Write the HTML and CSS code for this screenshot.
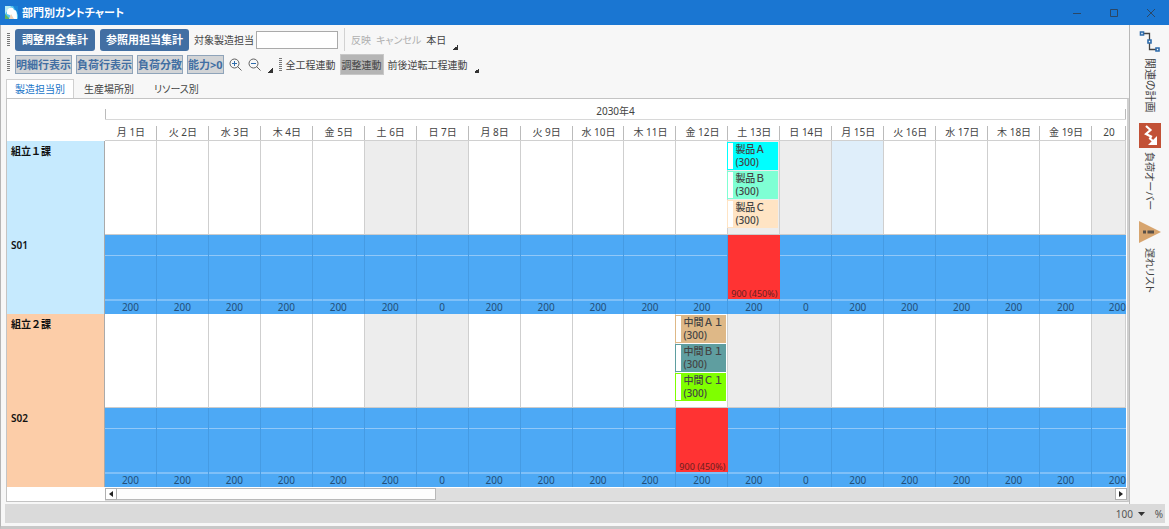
FILE: index.html
```html
<!DOCTYPE html>
<html lang="ja">
<head>
<meta charset="utf-8">
<title>部門別ガントチャート</title>
<link rel="stylesheet" href="styles.css">
</head>
<body>
<div class="window">
  <header class="titlebar">
    <svg class="app-icon" viewBox="0 0 13 13" aria-hidden="true"><rect width="13" height="13" rx="1" fill="#55c4ee"/><path d="M0 0h6L0 8z" fill="#b7ecf2"/><path d="M8 0h5v9z" fill="#1c86d8"/><path d="M0 8l5 5H0z" fill="#5db45e"/><path d="M2 5C3 1 8 0 9 4c3 0 3 3 3 9H6c0-3 0-4-4-5z" fill="#fff"/><path d="M6 8l3 5H4z" fill="#f3d3b6"/></svg>
    <h1 class="title">部門別ガントチャート</h1>
    <div class="window-buttons">
      <button class="window-button" aria-label="最小化"><svg viewBox="0 0 10 10"><path d="M1 5.500h8"/></svg></button>
      <button class="window-button" aria-label="最大化"><svg viewBox="0 0 10 10"><path d="M1.500 1.500h7v7h-7z"/></svg></button>
      <button class="window-button" aria-label="閉じる"><svg viewBox="0 0 10 10"><path d="M1 1l8 8m0-8l-8 8"/></svg></button>
    </div>
  </header>

  <div class="body">
    <main class="main">
      <div class="toolbar toolbar-top">
        <span class="grip"></span>
        <button class="primary">調整用全集計</button>
        <button class="primary">参照用担当集計</button>
        <label class="field">対象製造担当<input class="text-input" type="text"></label>
        <span class="separator"></span>
        <button class="plain" disabled>反映</button>
        <button class="plain" disabled>キャンセル</button>
        <button class="plain">本日</button>
        <span class="overflow"></span>
      </div>
      <div class="toolbar toolbar-bottom">
        <span class="grip"></span>
        <button class="toggle">明細行表示</button>
        <button class="toggle">負荷行表示</button>
        <button class="toggle">負荷分散</button>
        <button class="toggle">能力&gt;0</button>
        <button class="icon-button" aria-label="拡大"><svg viewBox="0 0 13 13"><circle cx="5.500" cy="5.500" r="4.500"/><path d="M8.500 8.500l4 4"/><path class="sign" d="M3 5.500h5m-2.500-2.500v5"/></svg></button>
        <button class="icon-button" aria-label="縮小"><svg viewBox="0 0 13 13"><circle cx="5.500" cy="5.500" r="4.500"/><path d="M8.500 8.500l4 4"/><path class="sign" d="M3 5.500h5"/></svg></button>
        <span class="overflow"></span>
        <span class="grip"></span>
        <button class="plain">全工程連動</button>
        <button class="plain pressed">調整連動</button>
        <button class="plain">前後逆転工程連動</button>
        <span class="overflow"></span>
      </div>

      <nav class="tabs">
        <button class="tab active">製造担当別</button>
        <button class="tab">生産場所別</button>
        <button class="tab">リソース別</button>
      </nav>

      <section class="chart">
        <div class="corner"></div>
        <div class="timeline">
          <div class="month">2030年4</div>
          <div class="days" id="days"></div>
        </div>
        <div class="label blue">組立１課</div>
        <div class="lane" id="lane1"></div>
        <div class="label blue">S01</div>
        <div class="lane load" id="load1"></div>
        <div class="label orange">組立２課</div>
        <div class="lane" id="lane2"></div>
        <div class="label orange">S02</div>
        <div class="lane load" id="load2"></div>
        <div class="corner"></div>
        <div class="scrollbar">
          <button class="scroll-button" aria-label="左へ"><svg viewBox="0 0 6 6"><path d="M5 0v6L1 3z"/></svg></button>
          <div class="track"><div class="thumb"></div></div>
          <button class="scroll-button" aria-label="右へ"><svg viewBox="0 0 6 6"><path d="M1 0v6l4-3z"/></svg></button>
        </div>
      </section>
    </main>

    <aside class="sidebar">
      <button class="side-item">
        <svg class="link-icon" viewBox="0 0 24 24"><path d="M6 3.500h5.500v16H18" fill="none" stroke="#444" stroke-width="1.300"/><g fill="#fff" stroke="#2f6cab" stroke-width="1.600"><path d="M2.500 2h3v3h-3zM10 10h3v3h-3zM18 18h3v3h-3z"/></g></svg>
        <span class="side-text">関連の計画</span>
      </button>
      <button class="side-item">
        <svg class="over-icon" viewBox="0 0 22 25"><path d="M0 0h22v25H0z" fill="#c25136"/><path d="M7 3l4.500 4-4.500 4 5 2.500-1 2 5 4.500" fill="none" stroke="#fff" stroke-width="2.200"/><path d="M18 13v9h-9z" fill="#fff"/></svg>
        <span class="side-text">負荷オーバー</span>
      </button>
      <button class="side-item">
        <svg class="delay-icon" viewBox="0 0 22 24"><path d="M0 1l22 11L0 23z" fill="#d7a56f"/><path d="M4 10.500h3v3H4zM8.500 10.500H15v3H8.500z" fill="#5a5148"/></svg>
        <span class="side-text">遅れリスト</span>
      </button>
    </aside>
  </div>

  <footer class="status">
    <label class="zoom"><select class="zoom-select"><option>100</option></select><svg class="caret" viewBox="0 0 7 4"><path d="M0 0h7L3.500 4z"/></svg><span>%</span></label>
  </footer>
</div>
<script src="script.js"></script>
</body>
</html>
```

FILE: styles.css
```css
* { box-sizing: border-box; }

body {
  margin: 0;
  background: #fff;
  color: #444;
  font: 10px/14px "Noto Sans", "Noto Sans CJK JP", sans-serif;
  font-feature-settings: "palt";
}

button, input, select {
  margin: 0;
  padding: 0;
  border: 0;
  background: none;
  color: inherit;
  font: inherit;
  font-feature-settings: inherit;
  white-space: nowrap;
}

svg { display: block; }

.window {
  display: flex;
  flex-direction: column;
  min-height: 100vh;
  background: #f7f7f7;
  border-left: 1px solid #b5b5b5;
  border-bottom: 3px solid #c8c8c8;
}

/* Title bar */
.titlebar {
  display: flex;
  align-items: center;
  gap: 4px;
  height: 25px;
  margin-left: -1px;
  padding-left: 5px;
  background: #1a76d2;
}
.app-icon { width: 13px; height: 13px; }
.title {
  flex: 1;
  margin: 0;
  color: #fff;
  font-size: 11px;
  font-weight: 700;
}
.window-buttons { display: flex; }
.window-button {
  display: grid;
  place-items: center;
  width: 37px;
  height: 25px;
}
.window-button svg {
  width: 10px;
  height: 10px;
  fill: none;
  stroke: #2b4766;
}

.body { display: flex; flex: 1; }
.main {
  display: flex;
  flex: 1;
  flex-direction: column;
  min-width: 0;
  padding: 3px 0 2px 5px;
}

/* Toolbars */
.toolbar {
  display: flex;
  align-items: center;
  padding-left: 1px;
}
.toolbar-top { gap: 5px; height: 23px; }
.toolbar-bottom { gap: 4px; height: 27px; }
.grip {
  width: 3px;
  height: 13px;
  background: repeating-linear-gradient(#777 0 1px, #f7f7f7 1px 2px);
}
.toolbar-bottom .grip:first-child { margin-right: 1px; }
.primary {
  height: 22px;
  padding: 0 6px;
  border-radius: 3px;
  background: #426fa3;
  color: #fff;
  font-size: 11px;
  font-weight: 700;
}
.primary:first-of-type { padding: 0 7px; }
.field {
  display: flex;
  align-items: center;
  gap: 2px;
}
.text-input {
  width: 82px;
  height: 18px;
  border: 1px solid #aaa;
  background: #fff;
}
.separator {
  width: 1px;
  height: 23px;
  margin: 0 1px;
  background: #d2d2d2;
}
.plain:disabled { color: #b0b0b0; }
.overflow {
  align-self: flex-end;
  width: 5px;
  height: 5px;
  margin: 0 2px 1px;
  background: linear-gradient(135deg, transparent 50%, #333 50%);
}
.toolbar-bottom .overflow { margin-bottom: 5px; }
.toggle {
  height: 19px;
  border: 1px solid #8fa4ba;
  background: #d2d4d6;
  color: #426fa3;
  font-size: 11px;
  font-weight: 700;
}
.icon-button { padding: 0 1px; }
.icon-button svg {
  width: 13px;
  height: 13px;
  fill: none;
  stroke: #606060;
}
.icon-button .sign { stroke: #2f6cab; }
.pressed {
  height: 21px;
  padding: 0 1px;
  border: 1px solid #c8c8c8;
  background: #b5b5b5;
}

/* Tabs */
.tabs { display: flex; height: 20px; padding-top: 1px; }
.tab { padding: 0 10px; }
.tab.active {
  padding: 0 8px;
  border: 1px solid #d0d0d0;
  border-bottom: 0;
  background: #fff;
  color: #1a76c8;
}

/* Gantt chart */
.chart {
  display: grid;
  grid-template-columns: 98px 1fr;
  grid-template-rows: auto auto auto auto auto 1fr;
  border: 1px solid #c4c4c4;
  border-right: 2px solid #cfcfcf;
  background: #fff;
}
.timeline { padding-right: 1px; }
.month {
  height: 21px;
  padding-top: 5px;
  border-bottom: 1px solid #d8d8d8;
  text-align: center;
  background: linear-gradient(#bbb, #bbb) left bottom / 1px 10px no-repeat, linear-gradient(#bbb, #bbb) right bottom / 1px 10px no-repeat;
}
.days, .lane {
  display: grid;
  grid-template-columns: repeat(19, minmax(0, 52fr)) minmax(0, 34fr);
}
.days { border-bottom: 1px solid #d0d0d0; }
.day {
  height: 20px;
  padding-top: 5px;
  text-align: center;
  background: linear-gradient(#bbb, #bbb) right bottom / 1px 14px no-repeat;
}
.label {
  padding: 3px 4px;
  border-right: 1px solid #aaa;
  color: #111;
  font-weight: 600;
  font-feature-settings: normal;
}
.blue { background: #c6eafe; }
.orange { background: #fccda8; }
.lane { margin-right: 1px; }
.cell {
  min-height: 94px;
  border-right: 1px solid #cfcfcf;
  border-bottom: 1px solid #ccc;
}
.cell.off { background: #ededed; }
.cell.today { background: #dfeefa; }

.task {
  display: flex;
  height: 28px;
  margin: 1px 1px 0 -1px;
  border: 1px solid var(--task);
  background: #fff;
}
.task + .task { margin-top: 1px; }
.task-body {
  flex: 1;
  min-width: 0;
  margin-left: 5px;
  padding-left: 2px;
  background: var(--task);
  font-weight: 500;
  line-height: 13px;
  white-space: nowrap;
  font-feature-settings: normal;
}
.cyan { --task: #00ffff; }
.aqua { --task: #7fffd4; }
.bisque { --task: #ffe4c4; }
.tan { --task: #deb887; }
.teal { --task: #5f9ea0; }
.lime { --task: #7fff00; }

.load-cell {
  border-right: 1px solid #459be3;
  background: #4da9f5;
  color: #234f78;
  text-align: center;
}
.load-top { height: 21px; border-bottom: 1px solid #91c8f8; }
.load-mid { height: 45px; border-bottom: 2px solid #7fc0f8; }
.load-over {
  display: flex;
  align-items: flex-end;
  justify-content: center;
  height: 64px;
  margin-right: -1px;
  background: #ff3333;
  color: #6b2020;
  font-size: 9px;
  line-height: 11px;
  white-space: nowrap;
}
.load-over-line { height: 2px; background: #7fc0f8; }
.load-value { height: 13px; line-height: 13px; }
.load-cell:last-child { border-right: 0; }
.load-cell:last-child .load-value { text-align: right; }

/* Scrollbar */
.scrollbar {
  display: flex;
  height: 13px;
  margin-top: 1px;
  background: #dedede;
}
.scroll-button {
  display: grid;
  place-items: center;
  width: 12px;
  height: 12px;
  border: 1px solid #b0b0b0;
  background: #fff;
}
.scroll-button svg { width: 6px; height: 6px; fill: #222; }
.track { flex: 1; }
.thumb {
  width: 32%;
  height: 12px;
  border: 1px solid #b8b8b8;
  border-left: 0;
  background: #fdfdfd;
}

/* Side panel */
.sidebar {
  display: flex;
  flex-direction: column;
  align-items: center;
  gap: 10px;
  width: 40px;
  padding-top: 5px;
  border-left: 1px solid #b8b8b8;
}
.side-item {
  display: flex;
  flex-direction: column;
  align-items: center;
  gap: 4px;
}
.side-text {
  font-size: 11px;
  line-height: 14px;
  writing-mode: vertical-rl;
  text-orientation: sideways;
}
.side-item + .side-item .side-text { font-size: 10px; }
.link-icon { width: 24px; height: 24px; }
.over-icon { width: 22px; height: 25px; }
.delay-icon { width: 22px; height: 24px; }

/* Status bar */
.status {
  display: flex;
  justify-content: flex-end;
  height: 19px;
  margin: 0 4px 3px;
  padding-right: 2px;
  background: #dadada;
}
.zoom { display: flex; align-items: center; color: #555; }
.zoom-select { width: 22px; appearance: none; }
.caret { width: 7px; height: 4px; margin-right: 10px; fill: #333; }
```

FILE: script.js
```js
const weekdays = ["月", "火", "水", "木", "金", "土", "日"];
const offDays = [6, 7, 13, 14, 20];
const zeroDays = [7, 14];
const dayCount = 20;

function each(id, render) {
  let html = "";
  for (let d = 1; d <= dayCount; d++) html += render(d);
  document.getElementById(id).innerHTML = html;
}

function task(name, color) {
  return `<div class="task ${color}"><div class="task-body">${name}<br>(300)</div></div>`;
}

function lane(id, taskDay, tasks, today) {
  each(id, d => {
    const kind = d === today ? " today" : offDays.includes(d) ? " off" : "";
    return `<div class="cell${kind}">${d === taskDay ? tasks : ""}</div>`;
  });
}

function load(id, overDay) {
  each(id, d => {
    const body = d === overDay
      ? '<div class="load-over">900 (450%)</div><div class="load-over-line"></div>'
      : '<div class="load-top"></div><div class="load-mid"></div>';
    return `<div class="load-cell">${body}<div class="load-value">${zeroDays.includes(d) ? 0 : 200}</div></div>`;
  });
}

each("days", d => `<div class="day">${d === dayCount ? d : weekdays[(d - 1) % 7] + " " + d + "日"}</div>`);
lane("lane1", 13, task("製品Ａ", "cyan") + task("製品Ｂ", "aqua") + task("製品Ｃ", "bisque"), 15);
load("load1", 13);
lane("lane2", 12, task("中間Ａ１", "tan") + task("中間Ｂ１", "teal") + task("中間Ｃ１", "lime"));
load("load2", 12);
```
